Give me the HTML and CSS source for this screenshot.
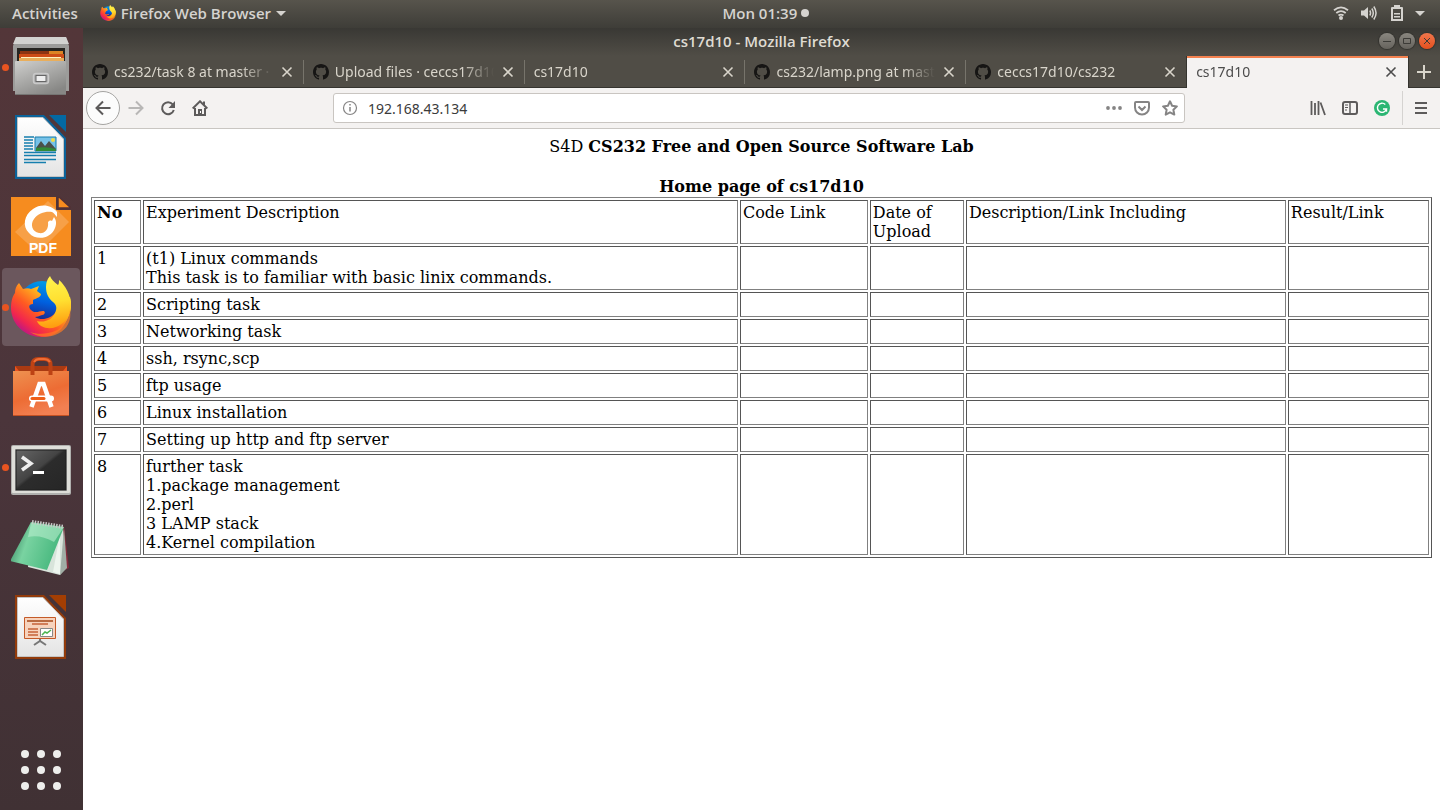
FILE: index.html
```html
<!DOCTYPE html>
<html lang="en">
<head>
<meta charset="utf-8">
<title>cs17d10 - Mozilla Firefox</title>
<link rel="stylesheet" href="styles.css">
</head>
<body>
<svg class="defs" aria-hidden="true">
  <defs>
    <symbol id="github" viewBox="0 0 16 16"><path d="M8 0C3.58 0 0 3.58 0 8c0 3.54 2.29 6.53 5.47 7.59.4.07.55-.17.55-.38 0-.19-.01-.82-.01-1.49-2.01.37-2.53-.49-2.69-.94-.09-.23-.48-.94-.82-1.13-.28-.15-.68-.52-.01-.53.63-.01 1.08.58 1.23.82.72 1.21 1.87.87 2.33.66.07-.52.28-.87.51-1.07-1.78-.2-3.64-.89-3.64-3.95 0-.87.31-1.59.82-2.15-.08-.2-.36-1.02.08-2.12 0 0 .67-.21 2.2.82.64-.18 1.32-.27 2-.27.68 0 1.36.09 2 .27 1.53-1.04 2.2-.82 2.2-.82.44 1.1.16 1.92.08 2.12.51.56.82 1.27.82 2.15 0 3.07-1.87 3.75-3.65 3.95.29.25.54.73.54 1.48 0 1.07-.01 1.93-.01 2.2 0 .21.15.46.55.38A8.01 8.01 0 0 0 16 8c0-4.42-3.58-8-8-8z" fill="#161514"/></symbol>
    <symbol id="close" viewBox="0 0 16 16"><path d="M3.5 3.5l9 9M12.500 3.500l-9 9" fill="none" stroke="currentColor" stroke-width="1.6"/></symbol>
    <linearGradient id="fxFlame" x1=".85" y1=".1" x2=".15" y2=".9"><stop offset="0" stop-color="#fff13c"/><stop offset=".3" stop-color="#ffb01e"/><stop offset=".58" stop-color="#ff5a22"/><stop offset=".82" stop-color="#f2264e"/><stop offset="1" stop-color="#b5158c"/></linearGradient>
    <linearGradient id="fxTail" x1=".4" y1="0" x2=".5" y2="1"><stop offset="0" stop-color="#fff44f"/><stop offset=".5" stop-color="#ffdf30"/><stop offset="1" stop-color="#ff980e"/></linearGradient>
    <linearGradient id="fxGlobe" x1=".6" y1="0" x2=".4" y2="1"><stop offset="0" stop-color="#009ee8"/><stop offset=".45" stop-color="#0060df"/><stop offset="1" stop-color="#25116a"/></linearGradient>
    <symbol id="firefox" viewBox="0 0 60 62">
      <circle cx="31" cy="28" r="23" fill="url(#fxGlobe)"/>
      <path d="M8 7l4 6c3-1 6-1 8 0l8-3-2 5 4 3c0 3-4 4-8 6v4c-4 0-5 3-2 6 4 4 8 1 12 1 3 0 2 4-1 4-3 1-5 2-7 2 6 4 16 2 21-5 3-4 4-8 3-12l11-3c2 7 1 12 0 16C55 50 46 61 31 61 14 61 1 49 0 33c0-7 1-12 4-16 0-4 1-7 4-10z" fill="url(#fxFlame)"/>
      <path d="M39 0c1 3 4 6 8 9 1-1 1-3 1-5 6 5 12 15 12 26-1 11-7 18-15 21-8 3-17 0-19-6 7 2 15-1 18-8 2-4 2-8-2-11-5-4-7-9-7-15 0-4 1-8 4-11z" fill="url(#fxTail)"/>
      <path d="M44 55c8-3 14-10 15-21 2 12-4 21-15 25-8 3-18 2-25-3 8 3 17 2 25-1z" fill="#ff7a22" opacity=".7"/>
    </symbol>
    <linearGradient id="metal" x2=".6" y2="1"><stop offset="0" stop-color="#cfcfcd"/><stop offset="1" stop-color="#878785"/></linearGradient>
    <linearGradient id="paper" y2="1" x2="0"><stop offset="0" stop-color="#fff"/><stop offset="1" stop-color="#e4e4e4"/></linearGradient>
    <linearGradient id="bag" x2=".4" y2="1"><stop offset="0" stop-color="#ee9150"/><stop offset=".6" stop-color="#ed6c34"/><stop offset="1" stop-color="#f28052"/></linearGradient>
    <linearGradient id="term" x2="1" y2="1"><stop offset="0" stop-color="#666"/><stop offset=".45" stop-color="#444"/><stop offset=".5" stop-color="#2c2c2c"/><stop offset="1" stop-color="#262626"/></linearGradient>
    <linearGradient id="green" x2="1" y2=".3"><stop offset="0" stop-color="#287151"/><stop offset=".4" stop-color="#79d3a1"/><stop offset="1" stop-color="#46b77d"/></linearGradient>
  </defs>
</svg>

<header class="topbar">
  <div class="topbar-left">
    <button class="panel-btn">Activities</button>
    <button class="panel-btn app-menu"><svg class="ic16"><use href="#firefox"/></svg>Firefox Web Browser<svg class="caret" viewBox="0 0 10 5"><path d="M0 0h10L5 5z" fill="currentColor"/></svg></button>
  </div>
  <button class="panel-btn clock">Mon 01:39<span class="dot"></span></button>
  <button class="panel-btn tray" aria-label="System menu">
    <span class="tray-icons">
    <svg class="ic16" viewBox="0 0 16 16" fill="none" stroke="currentColor" stroke-width="1.8"><path d="M1 5.200Q8-.4 15 5.200M3.300 8Q8 4.200 12.700 8M5.500 10.500Q8 8.600 10.500 10.500"/><circle cx="8" cy="13" r="2" fill="currentColor" stroke="none"/></svg>
    <svg class="ic16" viewBox="0 0 16 16" fill="none" stroke="currentColor" stroke-width="1.500"><path d="M0 5.500h3L7 2v12l-4-3.500H0z" fill="currentColor" stroke="none"/><path d="M8.800 5.500q1.500 2.500 0 5M10.800 3.500q3 4.500 0 9M12.800 1.500q4.500 6.500 0 13"/></svg>
    <svg class="ic16" viewBox="0 0 16 16"><path d="M3 2h2V0h6v2h2q1 0 1 1v13H2V3q0-1 1-1zm1 2v10h8V4z" fill="currentColor" fill-rule="evenodd"/><path d="M5 8h6v1.500H5zM5 11h6v1.500H5z" fill="currentColor"/></svg>
    </span>
    <svg class="caret" viewBox="0 0 10 5"><path d="M0 0h10L5 5z" fill="currentColor"/></svg>
  </button>
</header>

<div class="desktop">
  <nav class="dock" aria-label="Dock">
    <button class="dock-item running" aria-label="Files"><svg viewBox="0 0 60 62">
      <path d="M5 1h50l3 9v45H2V10z" fill="#9c9c9a"/><path d="M5 1h50l3 7H2z" fill="#d2d2d0"/><path d="M6 12h48v20H6z" fill="#262521"/>
      <path d="M9 15h43v4H9z" fill="#8c3412"/><path d="M38 15h14v3H38z" fill="#dc8424"/><path d="M8 18h45v5H8z" fill="#cd4c17"/><path d="M8 22h45v8H8z" fill="#e9ae5b"/><path d="M10 21h40v1H10z" fill="#fff1c0"/>
      <path d="M4 26q0-1 1-1h49q1 0 1 1v33H4z" fill="url(#metal)"/><path d="M4 58h51v1H4z" fill="#757573"/><rect x="22.500" y="37.500" width="15" height="10" rx="2.500" fill="#aaa" stroke="#c9c9c9" stroke-width="1.500"/><rect x="25" y="39.500" width="10" height="6" fill="#eee" stroke="#666"/>
    </svg></button>
    <button class="dock-item" aria-label="LibreOffice Writer"><svg viewBox="1 0 60 66">
      <path d="M39 1h17v17z" fill="#0369a3"/><path d="M5 1h29l22 23v41H5z" fill="#0b639a"/><path d="M7.500 3.500h25.500l20.500 21.500v37.500h-46z" fill="url(#paper)" stroke="#c4c4c4"/>
      <path d="M14 23h10M14 26h9M14 29h9M14 32h9M14 35h9M14 38.500h32M14 41.500h32M14 45.500h32M14 48.500h22" stroke="#167fae" stroke-width="1.400"/><path d="M25 23h21v14H25z" fill="#76c2e8" stroke="#187cab"/><path d="M26 34l5-7 4 5 4-5 7 8v1H26z" fill="#4a504a"/><path d="M26 34q10-2 20 1v2H26z" fill="#318b37"/><circle cx="43" cy="26" r="2" fill="#eedc49"/>
    </svg></button>
    <button class="dock-item" aria-label="Foxit PDF"><svg viewBox="0 1 60 60">
      <path d="M0 0h45v14h15v46H0z" fill="#f68c1f"/><path d="M47 0l13 12H47z" fill="#f68c1f" stroke="#513136" stroke-width="1.500"/><path d="M4 36L37 5l21 21-31 31z" fill="#fff" opacity=".18"/>
      <path fill-rule="evenodd" d="M46 16c-5-7-16-9-24-3-9 6-11 17-4 24 7 8 22 6 26-5 2-5 1-8-1-11l-2 4c-2-1-3 0-4 1 1 8-4 12-9 11-7-1-9-9-5-14 4-6 12-8 18-7 2 1 4 4 5 5 0-2 0-4 0-5z" fill="#fff"/><text x="32" y="57" text-anchor="middle" class="pdf">PDF</text>
    </svg></button>
    <button class="dock-item running active" aria-label="Firefox"><svg viewBox="0 0 60 62"><use href="#firefox"/></svg></button>
    <button class="dock-item" aria-label="Ubuntu Software"><svg viewBox="0 0 60 60">
      <path d="M4 9l52 0v8H4z" fill="#a93a12"/><path d="M4 9l4 5-4 3zM56 9l-4 5 4 3z" fill="#e95420"/><path d="M2 14h56v45H2z" fill="url(#bag)"/><path d="M2 58h56v1H2z" fill="#c45123"/>
      <path d="M21.500 18V8q0-6 6-6h6q6 0 6 6v10" fill="none" stroke="#bd4214" stroke-width="4"/><path d="M23 5q2-3 5-3h5q4 0 6 3" fill="none" stroke="#ef6d35" stroke-width="2"/>
      <path d="M20.500 50L28.500 27h4l8 23" fill="none" stroke="#fff" stroke-width="4.500"/><rect x="18" y="38.500" width="25" height="6" rx="3" fill="#fff"/><rect x="19.500" y="40" width="15" height="3" rx="1.500" fill="#ef5f18"/>
    </svg></button>
    <button class="dock-item running" aria-label="Terminal"><svg viewBox="0 -6 60 56">
      <rect width="60" height="50" rx="2" fill="#b0b0ae"/><rect x="1" y="1" width="58" height="47" rx="1" fill="#deded9"/><rect x="4" y="4" width="52" height="42" fill="#bdbdbb"/><rect x="5" y="5" width="50" height="40" fill="url(#term)" stroke="#1e1e1e"/>
      <path d="M11 12l9 6.500-9 6.500" fill="none" stroke="#eee" stroke-width="3.500"/><path d="M22 27.500h11" stroke="#fff" stroke-width="3"/>
    </svg></button>
    <button class="dock-item" aria-label="Notepadqq"><svg viewBox="0 -1 60 60">
      <path d="M53 8l5 42-4 2-8-35z" fill="#832c3c"/><path d="M22 7l30 3 3 40-6 7-32-8z" fill="#d8e4db"/><path d="M53 10l3 40-7 7z" fill="#a0aea5"/><path d="M49 16l-7 38 7 2z" fill="#edf5ee"/><path d="M20 4l33 5-17 43L-1 43z" fill="url(#green)"/><path d="M20 5l33 4-10 15q-14-8-26-5z" fill="#bdf0d2" opacity=".55"/><path d="M21 4l32 5" stroke="#c8cbc8" stroke-width="4" stroke-dasharray="1.500 1.200"/>
    </svg></button>
    <button class="dock-item" aria-label="LibreOffice Impress"><svg viewBox="1 0 60 66">
      <path d="M39 1h17v17z" fill="#a33e03"/><path d="M5 1h29l22 23v41H5z" fill="#923b0b"/><path d="M7.500 3.500h25.500l20.500 21.500v37.500h-46z" fill="url(#paper)" stroke="#c4c4c4"/>
      <path d="M14.500 23.500h31v21h-31z" fill="#f7d3bd" stroke="#c45a28"/><path d="M17 27h26" stroke="#a54719" stroke-width="1.500"/><path d="M22 30h16M18 35h10M18 38h10M18 41h10" stroke="#c66339" stroke-width="1.500"/><path d="M30.500 34.500h12v8h-12z" fill="#fff" stroke="#888"/><path d="M32 41l3-3 2 1 4-3" fill="none" stroke="#4db551" stroke-width="1.500"/><path d="M30 45v3M24 51l6-4 6 4" fill="none" stroke="#777" stroke-width="2"/>
    </svg></button>
    <button class="dock-item apps" aria-label="Show Applications"><svg viewBox="0 0 60 60" fill="#eeeeec"><circle cx="14" cy="14" r="4"/><circle cx="30" cy="14" r="4"/><circle cx="46" cy="14" r="4"/><circle cx="14" cy="30" r="4"/><circle cx="30" cy="30" r="4"/><circle cx="46" cy="30" r="4"/><circle cx="14" cy="46" r="4"/><circle cx="30" cy="46" r="4"/><circle cx="46" cy="46" r="4"/></svg></button>
  </nav>

  <div class="window">
    <div class="titlebar">
      <span class="window-title">cs17d10 - Mozilla Firefox</span>
      <div class="window-controls">
        <button class="wc" aria-label="Minimize"><svg viewBox="0 0 16 16"><path d="M4 8.500h8"/></svg></button>
        <button class="wc" aria-label="Maximize"><svg viewBox="0 0 16 16"><path d="M4.500 5.500h7v5h-7z"/></svg></button>
        <button class="wc wc-close" aria-label="Close"><svg viewBox="0 0 16 16"><path d="M5 5l6 6M11 5l-6 6"/></svg></button>
      </div>
    </div>

    <div class="tabs">
      <div class="tab"><svg class="ic16"><use href="#github"/></svg><span class="tab-title">cs232/task 8 at master ·</span><button class="tab-close" aria-label="Close tab"><svg class="ic16"><use href="#close"/></svg></button></div>
      <div class="tab"><svg class="ic16"><use href="#github"/></svg><span class="tab-title">Upload files · ceccs17d10</span><button class="tab-close" aria-label="Close tab"><svg class="ic16"><use href="#close"/></svg></button></div>
      <div class="tab"><span class="tab-title">cs17d10</span><button class="tab-close" aria-label="Close tab"><svg class="ic16"><use href="#close"/></svg></button></div>
      <div class="tab"><svg class="ic16"><use href="#github"/></svg><span class="tab-title">cs232/lamp.png at mast</span><button class="tab-close" aria-label="Close tab"><svg class="ic16"><use href="#close"/></svg></button></div>
      <div class="tab before-active"><svg class="ic16"><use href="#github"/></svg><span class="tab-title">ceccs17d10/cs232</span><button class="tab-close" aria-label="Close tab"><svg class="ic16"><use href="#close"/></svg></button></div>
      <div class="tab tab-active"><span class="tab-title">cs17d10</span><button class="tab-close" aria-label="Close tab"><svg class="ic16"><use href="#close"/></svg></button></div>
      <button class="new-tab" aria-label="New tab"><svg class="ic16" viewBox="0 0 16 16"><path d="M8 1v14M1 8h14" stroke="currentColor" stroke-width="2"/></svg></button>
    </div>

    <div class="toolbar">
      <button class="back" aria-label="Back"><svg class="ic16" viewBox="0 0 16 16"><path d="M15.500 8H1M8 1.500L1.500 8 8 14.500"/></svg></button>
      <button class="tool disabled" aria-label="Forward"><svg class="ic16" viewBox="0 0 16 16"><path d="M.5 8H15M8 1.500L14.500 8 8 14.500"/></svg></button>
      <button class="tool" aria-label="Reload"><svg class="ic16" viewBox="0 0 16 16"><path d="M12.700 4.300A6 6 0 1 0 13.800 10"/><path d="M15 1v7H8.500z" fill="currentColor" stroke="none"/></svg></button>
      <button class="tool" aria-label="Home"><svg class="ic16" viewBox="0 0 16 16"><path d="M.7 8.500L8 1.300l7.300 7.200M3 8v7h10V8M12 1.500v4"/><path d="M6 15V9h4v6z" fill="currentColor" stroke="none"/><path d="M8.500 11v2" stroke="#fff" stroke-width="1"/></svg></button>
      <div class="spring"></div>
      <div class="urlbar">
        <svg class="ic16 info" viewBox="0 0 16 16"><circle cx="8" cy="8" r="6.500" stroke-width="1.200"/><path d="M8 7v4.500M8 4v1.500" stroke-width="1.500"/></svg>
        <input type="text" value="192.168.43.134" aria-label="Address">
        <button class="url-btn" aria-label="Page actions"><svg class="ic16" viewBox="0 0 16 16"><g fill="currentColor" stroke="none"><circle cx="2" cy="8" r="1.900"/><circle cx="8" cy="8" r="1.900"/><circle cx="14" cy="8" r="1.900"/></g></svg></button>
        <button class="url-btn" aria-label="Save to Pocket"><svg class="ic16" viewBox="0 0 16 16"><path d="M2 2h12q1 0 1 1v4.500a7 7 0 0 1-14 0V3q0-1 1-1zM4.500 6.500L8 10l3.500-3.500"/></svg></button>
        <button class="url-btn" aria-label="Bookmark"><svg class="ic16" viewBox="0 0 16 16"><path d="M8 1.300l2.100 4.400 4.800.7-3.500 3.400.9 4.800L8 12.300l-4.300 2.300.9-4.800L1.100 6.400l4.800-.7z" stroke-linejoin="round"/></svg></button>
      </div>
      <div class="spring"></div>
      <button class="tool" aria-label="Library"><svg class="ic16" viewBox="0 0 16 16"><path d="M1.500 1v14M5 3v12M8.500 1v14M10.500 2.500L15 15" stroke-width="1.800"/></svg></button>
      <button class="tool" aria-label="Sidebars"><svg class="ic16" viewBox="0 0 16 16"><rect x="1" y="2" width="14" height="12" rx="2"/><path d="M8 2v12" stroke-width="1.500"/><path d="M3 5h3M3 7.500h3M3 10h2" stroke-width="1"/></svg></button>
      <button class="tool" aria-label="Grammarly"><svg class="ic16" viewBox="0 0 16 16"><circle cx="8" cy="8" r="8" fill="#2bb673" stroke="none"/><path d="M11.300 4.500A4.600 4.600 0 1 0 12.500 9H9M12.500 8.200v3.600" stroke="#fff" stroke-width="1.400"/></svg></button>
      <button class="tool menu" aria-label="Open menu"><svg class="ic16" viewBox="0 0 16 16"><path d="M2 3h12M2 8h12M2 13h12"/></svg></button>
    </div>

    <main class="page">
      <p class="heading">S4D <b>CS232 Free and Open Source Software Lab</b><br><br><b>Home page of cs17d10</b></p>
      <table class="tasks">
        <colgroup><col class="c-no"><col class="c-exp"><col class="c-code"><col class="c-date"><col class="c-desc"><col class="c-res"></colgroup>
        <tbody>
        <tr><th>No</th><td>Experiment Description</td><td>Code Link</td><td>Date of Upload</td><td>Description/Link Including</td><td>Result/Link</td></tr>
        <tr><td>1</td><td>(t1) Linux commands<br>This task is to familiar with basic linix commands.</td><td></td><td></td><td></td><td></td></tr>
        <tr><td>2</td><td>Scripting task</td><td></td><td></td><td></td><td></td></tr>
        <tr><td>3</td><td>Networking task</td><td></td><td></td><td></td><td></td></tr>
        <tr><td>4</td><td>ssh, rsync,scp</td><td></td><td></td><td></td><td></td></tr>
        <tr><td>5</td><td>ftp usage</td><td></td><td></td><td></td><td></td></tr>
        <tr><td>6</td><td>Linux installation</td><td></td><td></td><td></td><td></td></tr>
        <tr><td>7</td><td>Setting up http and ftp server</td><td></td><td></td><td></td><td></td></tr>
        <tr><td>8</td><td>further task<br>1.package management<br>2.perl<br>3 LAMP stack<br>4.Kernel compilation</td><td></td><td></td><td></td><td></td></tr>
        </tbody>
      </table>
    </main>
  </div>
</div>
</body>
</html>
```
FILE: styles.css
```css
* { box-sizing: border-box; }

body {
  margin: 0;
  min-height: 100vh;
  display: flex;
  flex-direction: column;
  font: 14px/20px "Noto Sans", "Open Sans", sans-serif;
  background: #fff;
}

button {
  font: inherit;
  color: inherit;
  background: none;
  border: 0;
  padding: 0;
  display: flex;
  align-items: center;
  justify-content: center;
}

svg { display: block; flex: none; }
.defs { position: absolute; width: 0; height: 0; }
.ic16 { width: 16px; height: 16px; }
.caret { width: 10px; height: 5px; }

/* Top panel */
.topbar {
  height: 28px;
  display: grid;
  grid-template-columns: 15fr auto 13fr;
  align-items: center;
  padding: 0 15px 2px 12px;
  background: linear-gradient(#57544c, #3e3d38);
  color: #d5d3cf;
}
.topbar, .window-title { font: 600 15px/20px "Open Sans", "Noto Sans", sans-serif; }
.topbar-left { display: flex; gap: 22px; }
.app-menu { gap: 5px; }
.clock { gap: 4px; }
.dot { width: 8px; height: 8px; border-radius: 50%; background: currentColor; }
.tray { justify-self: end; gap: 10px; }
.tray-icons { display: flex; gap: 12px; }

/* Dock */
.desktop { flex: 1; display: flex; }
.dock {
  flex: none;
  width: 83px;
  display: flex;
  flex-direction: column;
  gap: 2px;
  padding: 0 3px 1px 2px;
  background: linear-gradient(#533639, #4b353b 50%, #403134);
}
.dock-item { position: relative; height: 78px; border-radius: 4px; }
.dock-item svg { width: 60px; }
.dock-item.active { background: #6b575d; }
.dock-item.running::before {
  content: "";
  position: absolute;
  left: 0;
  top: 36px;
  width: 7px;
  height: 7px;
  border-radius: 50%;
  background: #e95420;
}
.dock-item.apps { margin-top: auto; }
.pdf { font: 700 14px "Liberation Sans", sans-serif; fill: #fff; }

/* Browser window */
.window { flex: 1; min-width: 0; display: flex; flex-direction: column; }
.titlebar {
  height: 28px;
  display: grid;
  grid-template-columns: 1fr auto 1fr;
  align-items: center;
  padding: 0 5px 2px;
  background: linear-gradient(#393834, #504d46);
  color: #dfdbd2;
}
.window-title { grid-column: 2; }
.window-controls { justify-self: end; display: flex; gap: 4px; }
.wc {
  width: 16px;
  height: 16px;
  border-radius: 50%;
  background: linear-gradient(#8a8780, #66635d);
  box-shadow: 0 0 1px 1px #33322e;
}
.wc svg { width: 16px; height: 16px; fill: none; stroke: #3c3b37; }
.wc-close { background: linear-gradient(#f0764c, #e5501e); }

.tabs { height: 32px; display: flex; background: #504d46; color: #d9d5cb; box-shadow: inset 0 -1px #35342f; }
.tab {
  flex: 1;
  min-width: 0;
  display: flex;
  align-items: center;
  gap: 6px;
  padding: 0 9px;
  background: linear-gradient(#77746b, #77746b) right center / 1px 24px no-repeat;
}
.before-active { background: none; }
.tab-title {
  flex: 1;
  overflow: hidden;
  white-space: nowrap;
  mask-image: linear-gradient(to left, transparent, #000 32px);
}
.tab-active {
  background: #f4f2f1;
  color: #4c4c4c;
  box-shadow: inset 0 2px #f4814f, -1px 0 #35342f, 1px 0 #35342f;
}
.new-tab { width: 32px; }

.toolbar {
  height: 41px;
  display: flex;
  align-items: center;
  padding: 0 3px;
  background: #f4f2f1;
  border-bottom: 1px solid #c9c6c2;
  color: #5d5b5b;
}
.toolbar svg { fill: none; stroke: currentColor; stroke-width: 2; }
.back { width: 34px; height: 34px; border: 1px solid #a5a4a2; border-radius: 50%; background: #fcfcfc; }
.tool { width: 32px; height: 34px; }
.disabled { color: #b8b7b6; }
.spring { flex: 7; }
.menu { width: 35px; border-left: 1px solid #d5d3d1; padding-left: 2px; margin-left: 4px; }
.urlbar {
  flex: 50;
  height: 30px;
  display: flex;
  align-items: center;
  gap: 12px;
  padding: 0 6px 0 8px;
  background: #fff;
  border: 1px solid #c9c5c1;
  border-radius: 3px;
  color: #858484;
}
.urlbar input {
  flex: 1;
  min-width: 0;
  height: 26px;
  padding: 0;
  margin-left: -2px;
  border: 0;
  outline: 0;
  font: inherit;
  color: #3b3b3b;
  background: none;
}

/* Page content */
.page {
  flex: 1;
  padding: 8px;
  background: #fff;
  color: #000;
  font: 16px/19px "DejaVu Serif", serif;
}
.heading { margin: 0; line-height: 20px; text-align: center; }
.tasks {
  width: 100%;
  table-layout: fixed;
  border: 1px solid;
  border-color: #808080 #555 #555 #808080;
  border-collapse: separate;
  border-spacing: 2px;
}
.tasks th, .tasks td {
  padding: 2px;
  border: 1px solid;
  border-color: #555 #808080 #808080 #555;
  text-align: left;
  vertical-align: top;
}
.tasks th { line-height: 20px; }
.c-no { width: 3.55%; }
.c-exp { width: 44.9%; }
.c-code { width: 9.65%; }
.c-date { width: 7.1%; }
.c-desc { width: 24.15%; }
.c-res { width: 10.65%; }
```
